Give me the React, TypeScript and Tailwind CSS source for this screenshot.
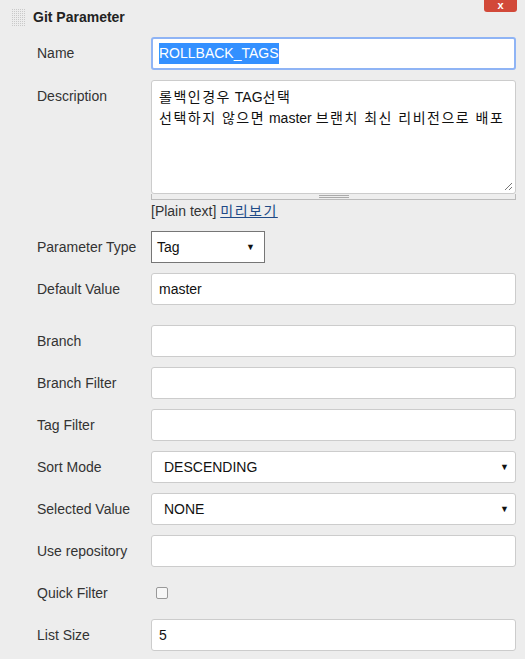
import React from 'react';

const font = { fontFamily: '"Liberation Sans", Arial, "Noto Sans CJK KR", sans-serif' };

const Label: React.FC<{ text: string }> = ({ text }) => (
  <div className="w-[114px] shrink-0 h-8 leading-8 text-[14px] text-[#333]">{text}</div>
);

// Hangul in the screenshot is set wider than Noto's glyphs
const Ko: React.FC<{ children: React.ReactNode }> = ({ children }) => (
  <span className="tracking-[1.5px]">{children}</span>
);

const TextBox: React.FC<{ value?: string }> = ({ value }) => (
  <div className="flex-1 h-8 bg-white border border-[#ccc] rounded-[3px] px-[7px] flex items-center text-[14px] text-[#111]">
    {value}
  </div>
);

const Select: React.FC<{ value: string; narrow?: boolean }> = ({ value, narrow }) => (
  <div
    className={
      narrow
        ? 'w-[114px] h-8 bg-white border border-[#767676] flex items-center justify-between pl-[5px] pr-[9px] text-[14px] text-[#111]'
        : 'flex-1 h-8 bg-white border border-[#ccc] rounded-[3px] flex items-center justify-between pl-[12px] pr-[6px] text-[14px] text-[#111]'
    }
  >
    <span>{value}</span>
    <span className="text-[9px] leading-none">▼</span>
  </div>
);

const Row: React.FC<{ label: string; children: React.ReactNode; className?: string }> = ({ label, children, className }) => (
  <div className={'flex items-start ' + (className || '')}>
    <Label text={label} />
    {children}
  </div>
);

export default function App() {
  return (
    <div className="w-[525px] h-[659px] bg-[#ededed] overflow-hidden relative" style={font}>
      {/* delete button */}
      <div className="absolute right-[8px] top-[-6px] w-[33px] h-[18px] bg-[#d24939] rounded-[3px] flex items-start justify-center">
        <span className="text-white text-[11px] font-bold leading-none mt-[6px]">x</span>
      </div>

      <div className="flex items-center h-[34px] pl-[12px] pt-[1px]">
        <svg width="14" height="18" viewBox="0 0 14 18" className="mr-[7px]">
          {Array.from({ length: 9 }).map((_, r) =>
            Array.from({ length: 7 }).map((__, c) => (
              <rect key={r + '-' + c} x={c * 2} y={r * 2} width="1" height="1" fill="#c9c9c9" />
            ))
          )}
        </svg>
        <span className="font-bold text-[14px] text-[#222]">Git Parameter</span>
      </div>

      <div className="flex flex-col gap-[10px] pl-[37px] pr-[9px] pt-[3px]">
        <Row label="Name">
          <div className="flex-1 h-[33px] bg-white border-2 border-[#8fb4f5] rounded-[3px] px-[6px] flex items-center text-[14px]">
            <span className="bg-[#3390ff] text-white">ROLLBACK_TAGS</span>
          </div>
        </Row>

        <Row label="Description">
          <div className="flex-1 flex flex-col">
            <div className="relative w-full h-[114px] bg-white border border-[#ccc] rounded-[3px] px-[7px] py-[6px] text-[14px] leading-[21px] text-[#111]">
              <div>
                <Ko>롤백인경우</Ko> TAG<Ko>선택</Ko>
              </div>
              <div>
                <Ko>선택하지 않으면</Ko> master <Ko>브랜치 최신 리비전으로 배포</Ko>
              </div>
              <svg width="9" height="9" viewBox="0 0 9 9" className="absolute right-[2px] bottom-[2px]">
                <path d="M1 8 L8 1 M5 8 L8 5" stroke="#777" strokeWidth="1" />
              </svg>
            </div>
            <div className="h-[6px] border border-t-0 border-[#bbb] bg-[#eee] flex items-center justify-center">
              <div className="w-[30px] h-[3px] border-t border-b border-[#aaa]" />
            </div>
            <div className="h-[20px] mt-[1px] text-[14px] text-[#333] leading-[20px]">
              [Plain text]{' '}
              <a href="#" className="text-[#204a87] underline tracking-[1.5px]">
                미리보기
              </a>
            </div>
          </div>
        </Row>

        <Row label="Parameter Type">
          <Select value="Tag" narrow />
        </Row>

        <Row label="Default Value">
          <TextBox value="master" />
        </Row>

        <Row label="Branch" className="mt-[10px]">
          <TextBox />
        </Row>

        <Row label="Branch Filter">
          <TextBox />
        </Row>

        <Row label="Tag Filter">
          <TextBox />
        </Row>

        <Row label="Sort Mode">
          <Select value="DESCENDING" />
        </Row>

        <Row label="Selected Value">
          <Select value="NONE" />
        </Row>

        <Row label="Use repository">
          <TextBox />
        </Row>

        <Row label="Quick Filter">
          <div className="h-8 flex items-center pl-[5px]">
            <div className="w-[12px] h-[12px] bg-[#f7f7f7] border border-[#999] rounded-[2px]" />
          </div>
        </Row>

        <Row label="List Size">
          <TextBox value="5" />
        </Row>
      </div>
    </div>
  );
}
